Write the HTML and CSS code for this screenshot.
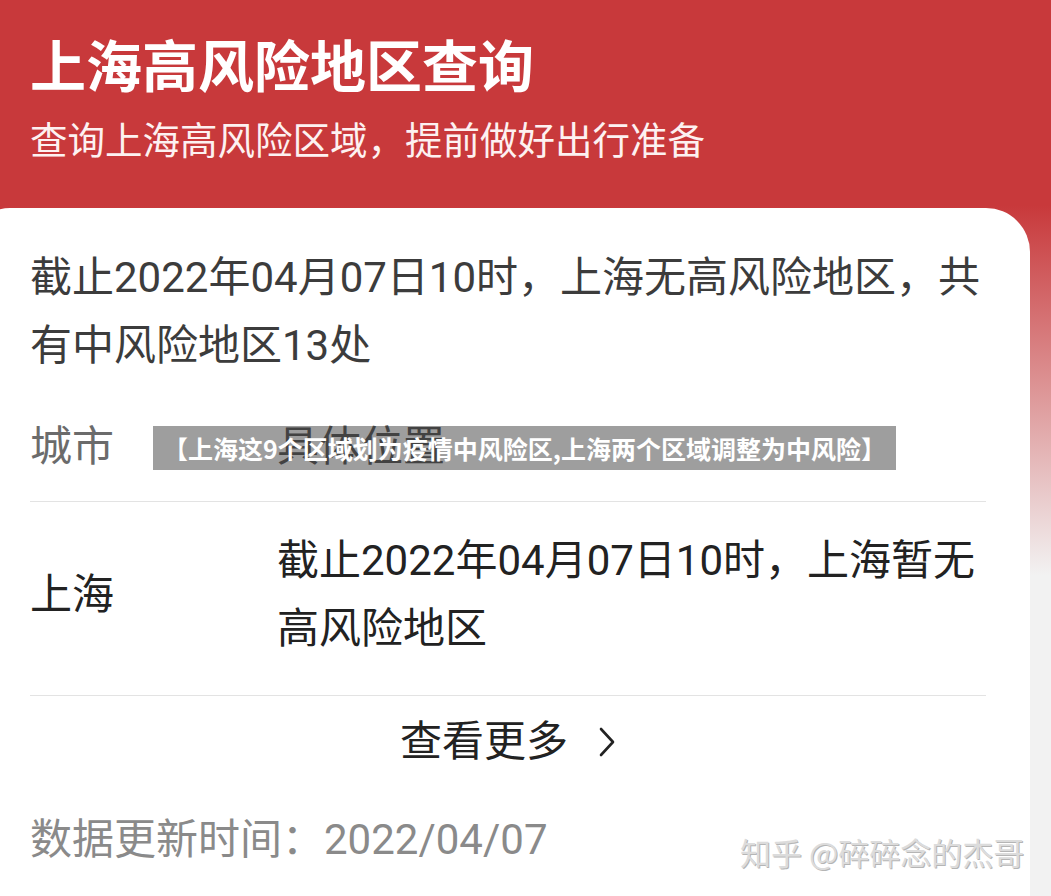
FILE: index.html
```html
<!DOCTYPE html>
<html lang="zh-CN">
<head>
<meta charset="utf-8">
<title>上海高风险地区查询</title>
<link rel="stylesheet" href="styles.css">
</head>
<body>
<div class="page">
  <header class="hero">
    <h1 class="hero-title">上海高风险地区查询</h1>
    <p class="hero-sub">查询上海高风险区域，提前做好出行准备</p>
  </header>
  <main class="card">
    <p class="intro">截止2022年04月07日10时，上海无高风险地区，共有中风险地区13处</p>
    <div class="table">
      <div class="row row-head">
        <div class="col-city">城市</div>
        <div class="col-loc">具体位置</div>
      </div>
      <div class="row row-data">
        <div class="col-city">上海</div>
        <div class="col-loc">截止2022年04月07日10时，上海暂无高风险地区</div>
      </div>
    </div>
    <div class="more">
      <span class="more-text">查看更多</span>
      <svg class="more-chevron" width="18" height="32" viewBox="0 0 18 32" aria-hidden="true"><polyline points="3,3 15,16 3,29" fill="none" stroke="#222" stroke-width="2.6" stroke-linecap="round" stroke-linejoin="round"/></svg>
    </div>
    <p class="updated">数据更新时间：2022/04/07</p>
  </main>
  <div class="banner">【上海这9个区域划为疫情中风险区,上海两个区域调整为中风险】</div>
  <div class="watermark">知乎 @碎碎念的杰哥</div>
</div>
</body>
</html>
```
FILE: styles.css
```css
* { box-sizing: border-box; }
html, body {
  margin: 0;
  padding: 0;
}
body {
  width: 1051px;
  height: 896px;
  overflow: hidden;
  font-family: "Noto Sans CJK SC", "Noto Sans", sans-serif;
  background: linear-gradient(to bottom, #c8393b 0, #c8393b 205px, #f2f2f2 575px, #f2f2f2 100%);
}
.page {
  position: relative;
  width: 1051px;
  height: 896px;
}
.hero {
  padding: 33px 0 0 30px;
  color: #fff;
}
.hero-title {
  margin: 0;
  font-size: 56px;
  line-height: 60px;
  font-weight: 700;
  letter-spacing: 0;
}
.hero-sub {
  margin: 20px 0 0;
  font-size: 37.5px;
  line-height: 50px;
  font-weight: 400;
  color: #fdf1f1;
}
.card {
  margin: 45px 0 0 -30px;
  width: 1060px;
  height: 700px;
  background: #fff;
  border-radius: 40px 44px 0 0;
  padding: 36px 44px 0 60px;
  font-family: Roboto, "Noto Sans CJK SC", sans-serif;
  font-size: 42px;
}
.intro {
  margin: 0;
  line-height: 68px;
  color: #3c3c3c;
}
.row {
  display: flex;
  border-bottom: 1.5px solid #e3e3e3;
}
.col-city {
  width: 247px;
  flex: none;
}
.col-loc {
  flex: 1;
}
.row-head {
  padding: 37px 0 24px;
  line-height: 60px;
  color: #6b6b6b;
}
.row-data {
  padding: 25px 0 32px;
  line-height: 68px;
  color: #222;
  align-items: center;
}
.more {
  height: 92px;
  display: flex;
  align-items: center;
  justify-content: center;
  gap: 30px;
  color: #222;
}
.more-text {
  line-height: 60px;
}
.more-chevron {
  display: block;
}
.updated {
  margin: 18px 0 0;
  line-height: 68px;
  color: #8a8a8a;
}
.banner {
  position: absolute;
  left: 153px;
  top: 426px;
  width: 743px;
  height: 44px;
  background: rgba(0, 0, 0, 0.38);
  color: #fff;
  font-weight: 700;
  font-size: 25px;
  line-height: 44px;
  text-align: center;
  white-space: nowrap;
}
.watermark {
  position: absolute;
  left: 740px;
  top: 831px;
  font-size: 31px;
  line-height: 42px;
  color: #dcdcdc;
  text-shadow: 1px 1px 0 #b5b5b5, -1px -1px 0 #ffffff;
  white-space: nowrap;
}
```
